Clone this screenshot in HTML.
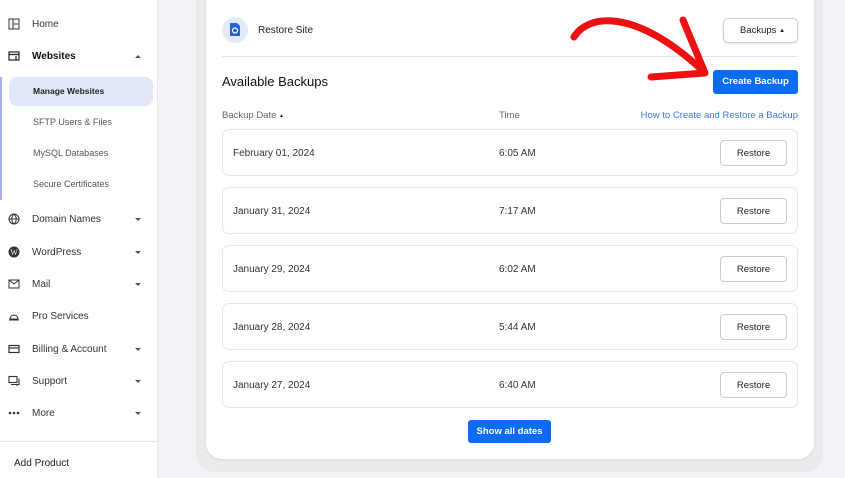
<!DOCTYPE html>
<html><head><style>
*{margin:0;padding:0;box-sizing:border-box}
body{width:845px;height:478px;overflow:hidden;background:#f2f3f6;font-family:"Liberation Sans",sans-serif;position:relative;color:#222}
.sb{position:absolute;left:0;top:0;width:158px;height:478px;background:#fff;border-right:1px solid #e8e9ee}
.it{position:absolute;left:0;width:158px;font-size:10px;color:#333;height:16px;line-height:16px}
.it .ic{position:absolute;left:8px;top:2px;width:12px;height:12px;display:block}
.it .t{position:absolute;left:32px;top:1px}
.it .c{position:absolute;left:135px;top:7px;width:0;height:0;border-left:3px solid transparent;border-right:3px solid transparent;border-top:3px solid #555}
.sub{position:absolute;left:33px;font-size:9px;color:#555}
.outer{position:absolute;left:196px;top:-20px;width:627px;height:492px;background:#ebebee;border-radius:18px}
.card{position:absolute;left:206px;top:-20px;width:608px;height:479px;background:#fff;border-radius:16px;box-shadow:0 1px 3px rgba(0,0,0,.08)}
.row{position:absolute;left:222px;width:576px;height:47px;border:1px solid #e6e7eb;border-radius:7px;font-size:10px;color:#333}
.row .d{position:absolute;left:10px;top:18px}
.row .tm{position:absolute;left:276px;top:18px}
.row .b{position:absolute;left:497px;top:10px;width:67px;height:26px;border:1px solid #c9ccd3;border-radius:4px;text-align:center;line-height:26px;font-size:9.5px;color:#222}
.btn{position:absolute;background:#0a6cf0;color:#fff;font-weight:bold;font-size:9.5px;text-align:center;border-radius:3px}
</style></head><body>
<div class="sb">
 <div class="it" style="top:16px"><svg class="ic" viewBox="0 0 12 12" fill="none" stroke="#333" stroke-width="1"><rect x="1" y="1" width="10" height="10"/><path d="M5 1v10M5 6h6"/></svg><span class="t">Home</span></div>
 <div class="it" style="top:48px;font-weight:bold;color:#111"><svg class="ic" viewBox="0 0 12 12" fill="none" stroke="#222" stroke-width="1.2"><rect x="1" y="2" width="10" height="8"/><path d="M1 4.5h10M8 6v4"/></svg><span class="t">Websites</span><span class="c" style="border-top:none;border-bottom:3px solid #555"></span></div>
 <div style="position:absolute;left:0;top:77px;width:2px;height:123px;background:#a9b1f0"></div>
 <div style="position:absolute;left:9px;top:77px;width:144px;height:29px;background:#e0e8f9;border-radius:8px"></div>
 <div class="sub" style="top:86px;color:#222;font-weight:bold;font-size:8.5px">Manage Websites</div>
 <div class="sub" style="top:117px">SFTP Users &amp; Files</div>
 <div class="sub" style="top:148px">MySQL Databases</div>
 <div class="sub" style="top:179px">Secure Certificates</div>
 <div class="it" style="top:211px"><svg class="ic" viewBox="0 0 12 12" fill="none" stroke="#333" stroke-width="1"><circle cx="6" cy="6" r="5"/><path d="M1 6h10M6 1c-3 3-3 7 0 10M6 1c3 3 3 7 0 10"/></svg><span class="t">Domain Names</span><span class="c"></span></div>
 <div class="it" style="top:244px"><svg class="ic" viewBox="0 0 12 12"><circle cx="6" cy="6" r="5.5" fill="#333"/><text x="6" y="9" font-size="8" fill="#fff" text-anchor="middle" font-family="Liberation Serif">W</text></svg><span class="t">WordPress</span><span class="c"></span></div>
 <div class="it" style="top:276px"><svg class="ic" viewBox="0 0 12 12" fill="none" stroke="#333" stroke-width="1"><rect x="1" y="2" width="10" height="8"/><path d="M1 2l5 4 5-4"/></svg><span class="t">Mail</span><span class="c"></span></div>
 <div class="it" style="top:308px"><svg class="ic" viewBox="0 0 12 12" fill="none" stroke="#333" stroke-width="1"><path d="M2 9a4 4 0 0 1 8 0zM1 10h10"/></svg><span class="t">Pro Services</span></div>
 <div class="it" style="top:341px"><svg class="ic" viewBox="0 0 12 12" fill="none" stroke="#333" stroke-width="1.2"><rect x="1" y="2.5" width="10" height="7"/><path d="M1 5h10"/></svg><span class="t">Billing &amp; Account</span><span class="c"></span></div>
 <div class="it" style="top:373px"><svg class="ic" viewBox="0 0 12 12" fill="none" stroke="#333" stroke-width="1.1"><rect x="1" y="1.5" width="8" height="6"/><path d="M3 9.5h8v-6M9 9.5v1.5"/></svg><span class="t">Support</span><span class="c"></span></div>
 <div class="it" style="top:405px"><svg class="ic" viewBox="0 0 12 12" fill="#333"><circle cx="2" cy="6" r="1.3"/><circle cx="6" cy="6" r="1.3"/><circle cx="10" cy="6" r="1.3"/></svg><span class="t">More</span><span class="c"></span></div>
 <div style="position:absolute;left:0;top:441px;width:157px;height:1px;background:#e5e6ea"></div>
 <div style="position:absolute;left:14px;top:458px;font-size:10px;color:#222">Add Product</div>
</div>
<div class="outer"></div>
<div class="card"></div>
<div style="position:absolute;left:222px;top:17px;width:26px;height:26px;border-radius:50%;background:#e3ebfa"></div>
<svg style="position:absolute;left:229px;top:22px" width="12" height="15" viewBox="0 0 12 15"><path d="M1 1h7l3 3v10H1z" fill="#1e64e0"/><circle cx="6" cy="8.5" r="2.5" fill="none" stroke="#fff" stroke-width="1.2"/></svg>
<div style="position:absolute;left:258px;top:25px;font-size:10px;color:#222">Restore Site</div>
<div style="position:absolute;left:723px;top:18px;width:75px;height:25px;border:1px solid #cdd0d6;border-radius:5px;font-size:9.5px;line-height:24px;padding-left:16px;box-shadow:0 1px 2px rgba(0,0,0,.1)">Backups <span style="font-size:6px;position:relative;top:-1px">▲</span></div>
<div style="position:absolute;left:222px;top:56px;width:576px;height:1px;background:#e6e7eb"></div>
<div style="position:absolute;left:222px;top:74px;font-size:13px;color:#111">Available Backups</div>
<div class="btn" style="left:713px;top:70px;width:85px;height:24px;line-height:24px">Create Backup</div>
<div style="position:absolute;left:222px;top:110px;font-size:9.5px;color:#666">Backup Date <span style="font-size:5px;color:#222;position:relative;top:-1px">▲</span></div>
<div style="position:absolute;left:499px;top:110px;font-size:9.5px;color:#666">Time</div>
<div style="position:absolute;right:47px;top:110px;font-size:9.5px;color:#3a78e0">How to Create and Restore a Backup</div>
<div class="row" style="top:129px"><span class="d">February 01, 2024</span><span class="tm">6:05 AM</span><span class="b">Restore</span></div>
<div class="row" style="top:187px"><span class="d">January 31, 2024</span><span class="tm">7:17 AM</span><span class="b">Restore</span></div>
<div class="row" style="top:245px"><span class="d">January 29, 2024</span><span class="tm">6:02 AM</span><span class="b">Restore</span></div>
<div class="row" style="top:303px"><span class="d">January 28, 2024</span><span class="tm">5:44 AM</span><span class="b">Restore</span></div>
<div class="row" style="top:361px"><span class="d">January 27, 2024</span><span class="tm">6:40 AM</span><span class="b">Restore</span></div>
<div class="btn" style="left:468px;top:420px;width:83px;height:23px;line-height:23px">Show all dates</div>
<svg style="position:absolute;left:0;top:0" width="845" height="478"><g fill="none" stroke="#ee1111" stroke-linecap="round" stroke-linejoin="round"><path d="M574 37C588 14 635 8 702 70" stroke-width="7"/><path d="M651 77L705 73L683 20" stroke-width="7"/></g></svg>
</body></html>
